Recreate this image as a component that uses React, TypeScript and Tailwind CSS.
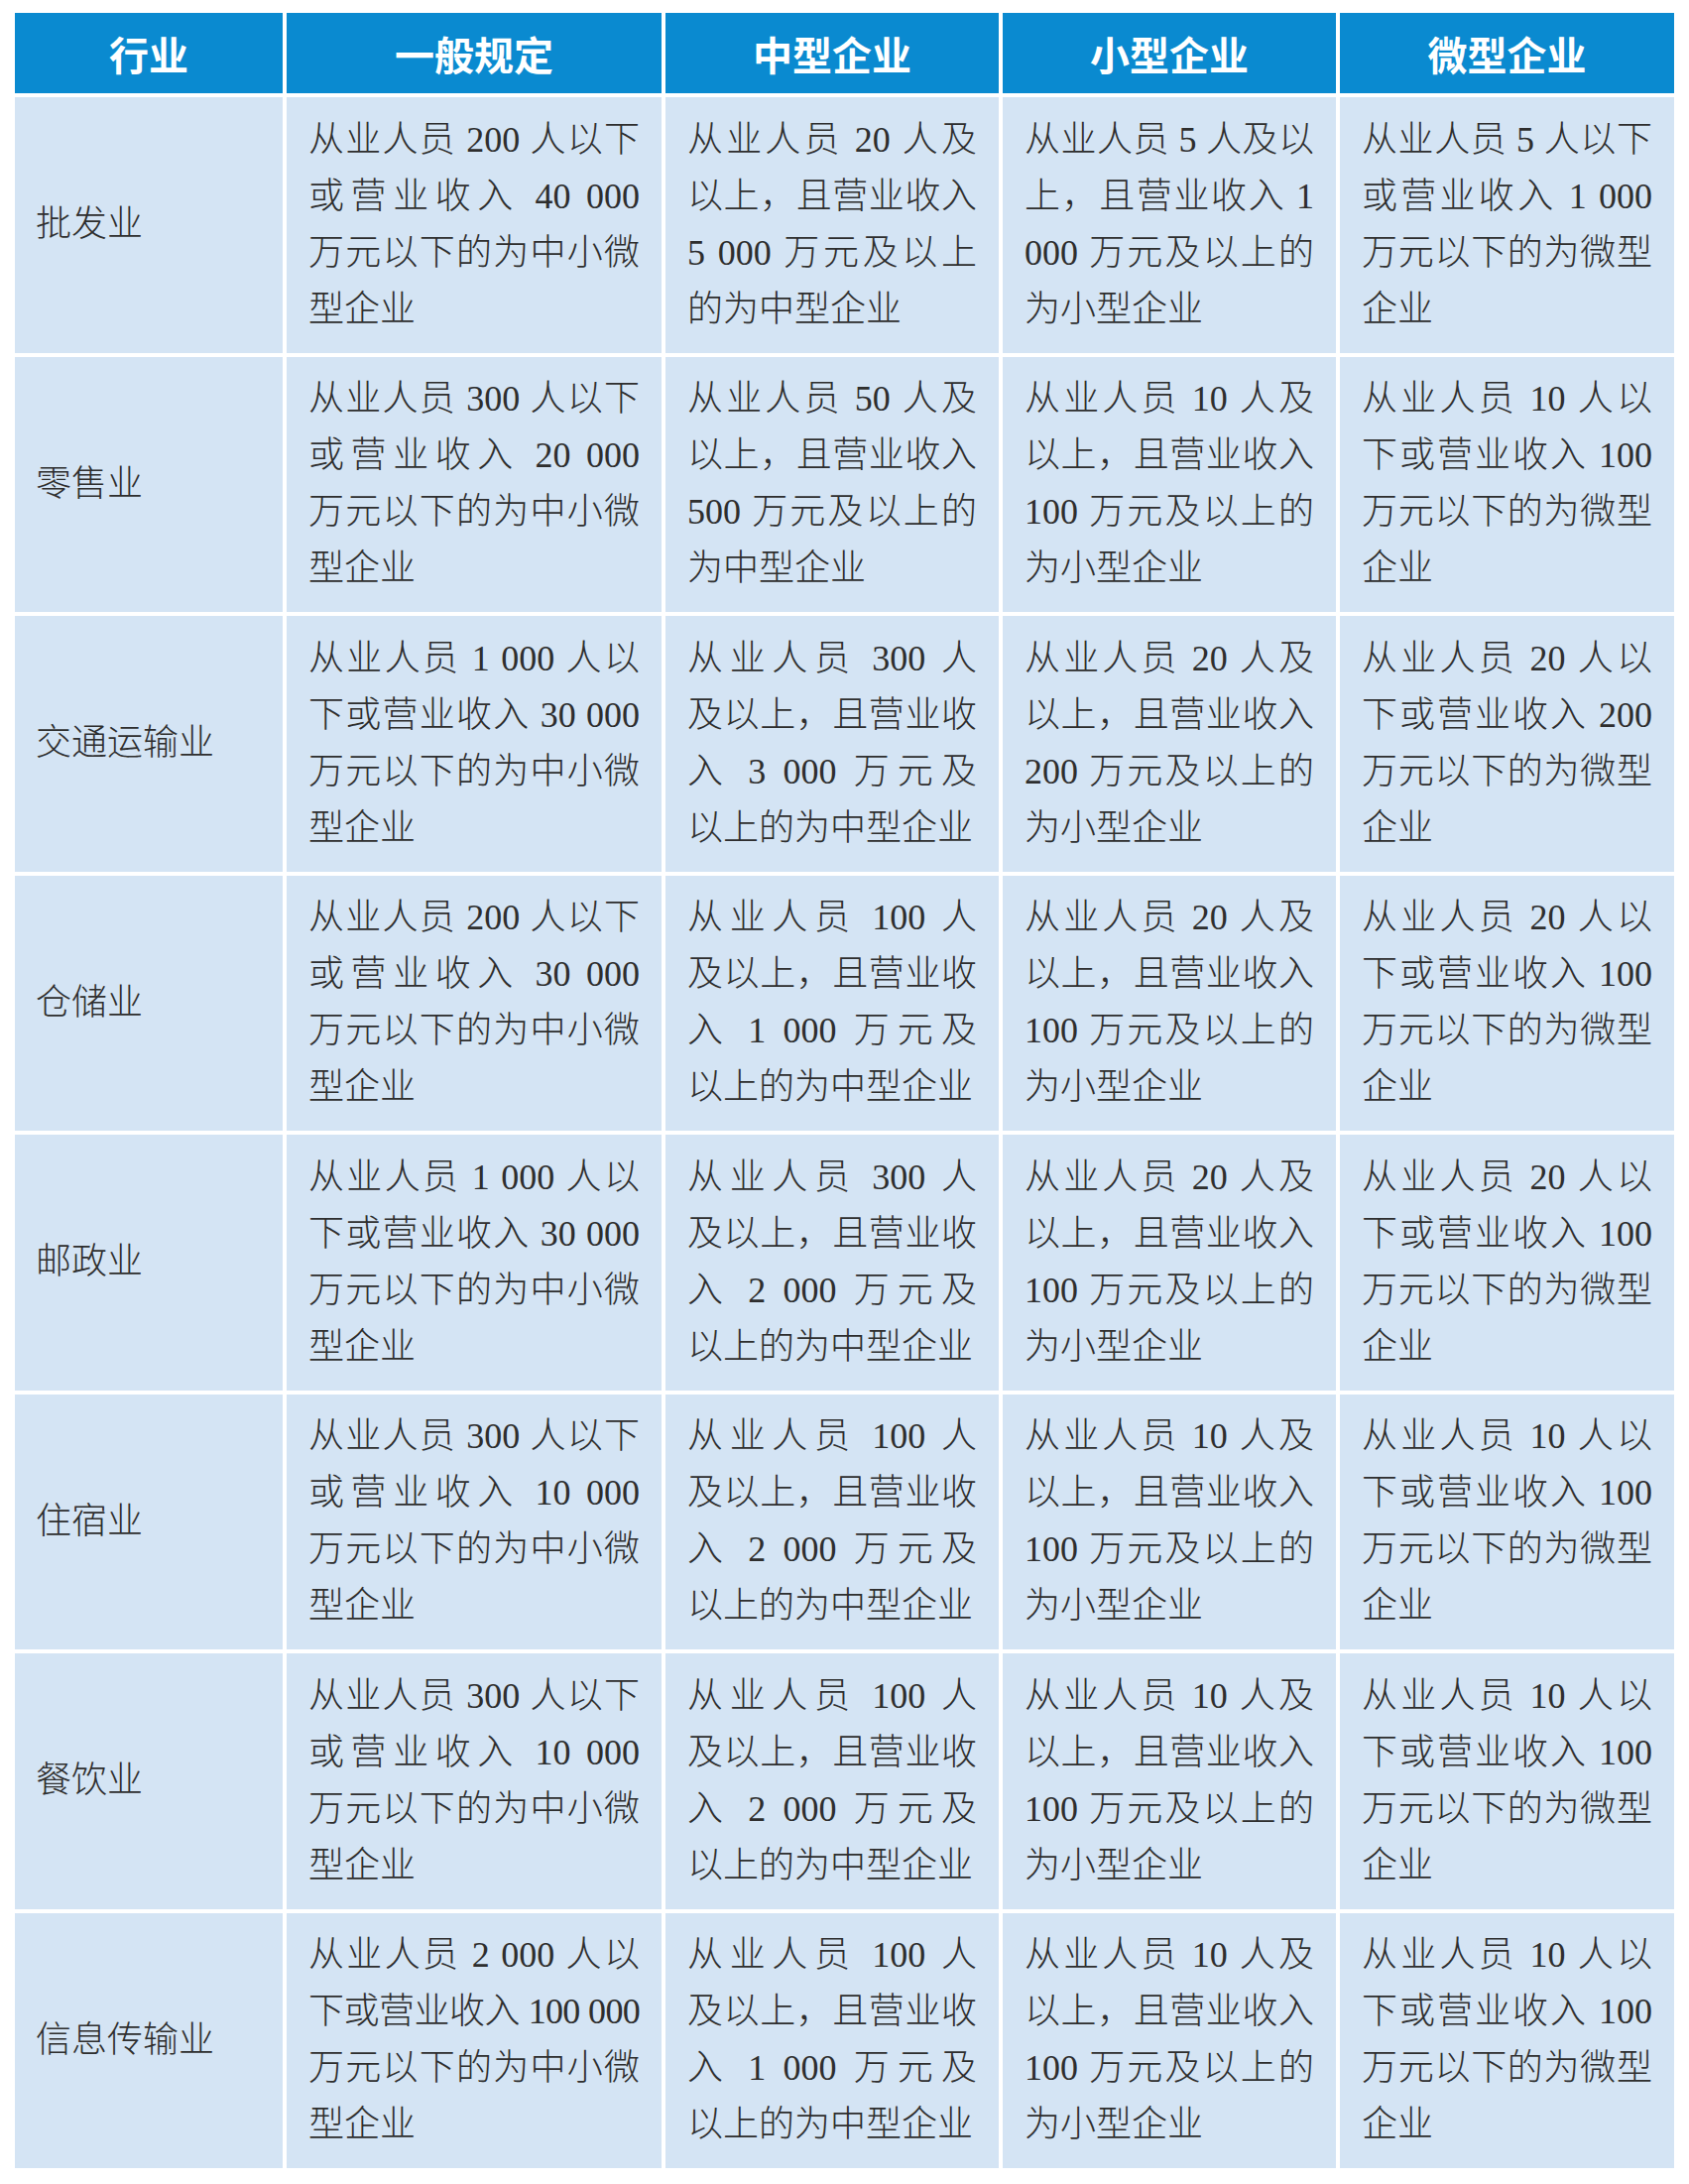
import React from "react";

type Cell = string[];
type Row = { name: string; cells: Cell[] };

const rows: Row[] = [
  {
    name: "批发业",
    cells: [
      ["从业人员 200 人以下", "或营业收入 40 000", "万元以下的为中小微", "型企业"],
      ["从业人员 20 人及", "以上，且营业收入", "5 000 万元及以上", "的为中型企业"],
      ["从业人员 5 人及以", "上，且营业收入 1", "000 万元及以上的", "为小型企业"],
      ["从业人员 5 人以下", "或营业收入 1 000", "万元以下的为微型", "企业"],
    ],
  },
  {
    name: "零售业",
    cells: [
      ["从业人员 300 人以下", "或营业收入 20 000", "万元以下的为中小微", "型企业"],
      ["从业人员 50 人及", "以上，且营业收入", "500 万元及以上的", "为中型企业"],
      ["从业人员 10 人及", "以上，且营业收入", "100 万元及以上的", "为小型企业"],
      ["从业人员 10 人以", "下或营业收入 100", "万元以下的为微型", "企业"],
    ],
  },
  {
    name: "交通运输业",
    cells: [
      ["从业人员 1 000 人以", "下或营业收入 30 000", "万元以下的为中小微", "型企业"],
      ["从业人员 300 人", "及以上，且营业收", "入 3 000 万元及", "以上的为中型企业"],
      ["从业人员 20 人及", "以上，且营业收入", "200 万元及以上的", "为小型企业"],
      ["从业人员 20 人以", "下或营业收入 200", "万元以下的为微型", "企业"],
    ],
  },
  {
    name: "仓储业",
    cells: [
      ["从业人员 200 人以下", "或营业收入 30 000", "万元以下的为中小微", "型企业"],
      ["从业人员 100 人", "及以上，且营业收", "入 1 000 万元及", "以上的为中型企业"],
      ["从业人员 20 人及", "以上，且营业收入", "100 万元及以上的", "为小型企业"],
      ["从业人员 20 人以", "下或营业收入 100", "万元以下的为微型", "企业"],
    ],
  },
  {
    name: "邮政业",
    cells: [
      ["从业人员 1 000 人以", "下或营业收入 30 000", "万元以下的为中小微", "型企业"],
      ["从业人员 300 人", "及以上，且营业收", "入 2 000 万元及", "以上的为中型企业"],
      ["从业人员 20 人及", "以上，且营业收入", "100 万元及以上的", "为小型企业"],
      ["从业人员 20 人以", "下或营业收入 100", "万元以下的为微型", "企业"],
    ],
  },
  {
    name: "住宿业",
    cells: [
      ["从业人员 300 人以下", "或营业收入 10 000", "万元以下的为中小微", "型企业"],
      ["从业人员 100 人", "及以上，且营业收", "入 2 000 万元及", "以上的为中型企业"],
      ["从业人员 10 人及", "以上，且营业收入", "100 万元及以上的", "为小型企业"],
      ["从业人员 10 人以", "下或营业收入 100", "万元以下的为微型", "企业"],
    ],
  },
  {
    name: "餐饮业",
    cells: [
      ["从业人员 300 人以下", "或营业收入 10 000", "万元以下的为中小微", "型企业"],
      ["从业人员 100 人", "及以上，且营业收", "入 2 000 万元及", "以上的为中型企业"],
      ["从业人员 10 人及", "以上，且营业收入", "100 万元及以上的", "为小型企业"],
      ["从业人员 10 人以", "下或营业收入 100", "万元以下的为微型", "企业"],
    ],
  },
  {
    name: "信息传输业",
    cells: [
      ["从业人员 2 000 人以", "下或营业收入 100 000", "万元以下的为中小微", "型企业"],
      ["从业人员 100 人", "及以上，且营业收", "入 1 000 万元及", "以上的为中型企业"],
      ["从业人员 10 人及", "以上，且营业收入", "100 万元及以上的", "为小型企业"],
      ["从业人员 10 人以", "下或营业收入 100", "万元以下的为微型", "企业"],
    ],
  },
];

const headers = ["行业", "一般规定", "中型企业", "小型企业", "微型企业"];

const bodyFont =
  "font-['Liberation_Serif','Noto_Sans_CJK_SC',serif] font-light text-[36px] leading-[57px] text-[#2e2e2e]";

function TextCell({ lines }: { lines: Cell }) {
  return (
    <div className="flex flex-col justify-center bg-[#d4e4f4] px-[22px]">
      {lines.map((l, i) => {
        const last = i === lines.length - 1;
        const tight = l.length > 13 && l.includes("100 000");
        return (
          <div
            key={i}
            className={
              bodyFont +
              " whitespace-nowrap " +
              (last ? "text-left" : "text-justify [text-align-last:justify]") +
              (tight ? " tracking-[-0.7px]" : "")
            }
          >
            {l}
          </div>
        );
      })}
    </div>
  );
}

export default function App() {
  return (
    <div className="min-h-[2202px] w-[1703px] bg-white pl-[15px] pt-[13px]">
      <div className="grid w-[1673px] grid-cols-[270px_378px_336px_336px_337px] grid-rows-[81px_repeat(8,257.5px)] gap-[4px] bg-white">
        {headers.map((h) => (
          <div
            key={h}
            className="flex items-center justify-center bg-[#0a8ad0] font-['Noto_Sans_CJK_SC',sans-serif] text-[40px] font-bold leading-none text-white"
          >
            {h}
          </div>
        ))}
        {rows.map((r) => (
          <React.Fragment key={r.name}>
            <div className={"flex items-center bg-[#d4e4f4] pl-[21px] " + bodyFont}>{r.name}</div>
            {r.cells.map((c, j) => (
              <TextCell key={j} lines={c} />
            ))}
          </React.Fragment>
        ))}
      </div>
    </div>
  );
}
